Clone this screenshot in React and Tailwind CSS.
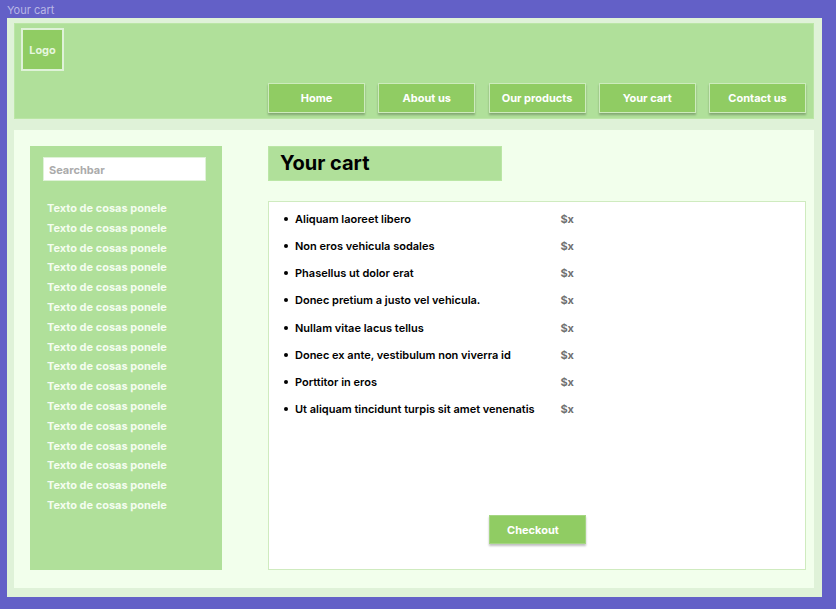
const navItems = ["Home", "About us", "Our products", "Your cart", "Contact us"];

const sideLinks = Array.from({ length: 16 }, () => "Texto de cosas ponele");

const cartItems = [
  "Aliquam laoreet libero",
  "Non eros vehicula sodales",
  "Phasellus ut dolor erat",
  "Donec pretium a justo vel vehicula.",
  "Nullam vitae lacus tellus",
  "Donec ex ante, vestibulum non viverra id",
  "Porttitor in eros",
  "Ut aliquam tincidunt turpis sit amet venenatis",
];

function Header() {
  return (
    <header className="flex flex-col border border-[#bbe6a6] bg-[#b0e09a] pt-1 pr-[7px] pb-[5px] pl-[6px]">
      <a
        href="#home"
        className="flex size-[43px] items-center justify-center border-2 border-[#dff2d8] bg-[#90cc63] text-[#e6f6df]"
      >
        Logo
      </a>
      <nav className="mt-3 ml-[247px] flex justify-between">
        {navItems.map((label) => (
          <button
            key={label}
            type="button"
            className="h-[30px] w-[97px] border border-[#cdebbd] bg-[#90cc63] text-center whitespace-nowrap text-white shadow-[0_2px_2px_rgba(0,0,0,0.25)]"
          >
            {label}
          </button>
        ))}
      </nav>
    </header>
  );
}

function Sidebar() {
  return (
    <aside className="w-[192px] shrink-0 bg-[#b0e09a] pt-[11px] pr-4 pl-[13px]">
      <input
        type="text"
        aria-label="Searchbar"
        placeholder="Searchbar"
        className="block h-6 w-full border border-[#dff2d8] bg-white px-[5px] pt-[2px] outline-none placeholder:text-[#ababab] placeholder:opacity-100"
      />
      <ul className="mt-[19px] ml-1 flex h-[313px] flex-col justify-between text-[#f4fdf0]">
        {sideLinks.map((label, i) => (
          <li key={i} className="flex">
            <a href="#texto">{label}</a>
          </li>
        ))}
      </ul>
    </aside>
  );
}

function Cart() {
  return (
    <div className="flex grow flex-col">
      <h1 className="h-[35px] w-[234px] border border-[#bbe6a6] bg-[#b0e09a] pl-[11px] text-[20px] leading-[32px] font-bold text-black">
        Your cart
      </h1>
      <section className="mt-5 flex h-[369px] flex-col border border-[#cfebbf] bg-white pt-[9px] pb-[25px] pl-[15px]">
        <ul className="flex h-[206px] w-[290px] flex-col justify-between">
          {cartItems.map((name) => (
            <li key={name} className="flex items-center">
              <span className="mr-[7px] size-1 rounded-full bg-black" />
              <span className="grow font-semibold whitespace-nowrap text-black">{name}</span>
              <span className="text-[#707070]">$x</span>
            </li>
          ))}
        </ul>
        <button
          type="button"
          className="mt-auto ml-[205px] h-[29px] w-[97px] border border-[#a5d683] bg-[#90cc63] pl-[17px] text-left text-white shadow-[0_2px_2px_rgba(0,0,0,0.25)]"
        >
          Checkout
        </button>
      </section>
    </div>
  );
}

export default function App() {
  return (
    <div className="min-h-screen bg-[#6360c7] pr-[14px] pb-3 pl-[7px] font-['Inter',sans-serif] text-[11px] leading-4 font-bold">
      <p className="h-[18px] pt-[2px] font-normal text-[#b9b7e6]">Your cart</p>
      <div className="bg-[#dff2d8] pt-[5px] pr-2 pb-[9px] pl-[7px]">
        <Header />
        <main className="mt-[11px] flex gap-[46px] bg-[#f2ffec] pt-4 pr-2 pb-[18px] pl-4">
          <Sidebar />
          <Cart />
        </main>
      </div>
    </div>
  );
}
